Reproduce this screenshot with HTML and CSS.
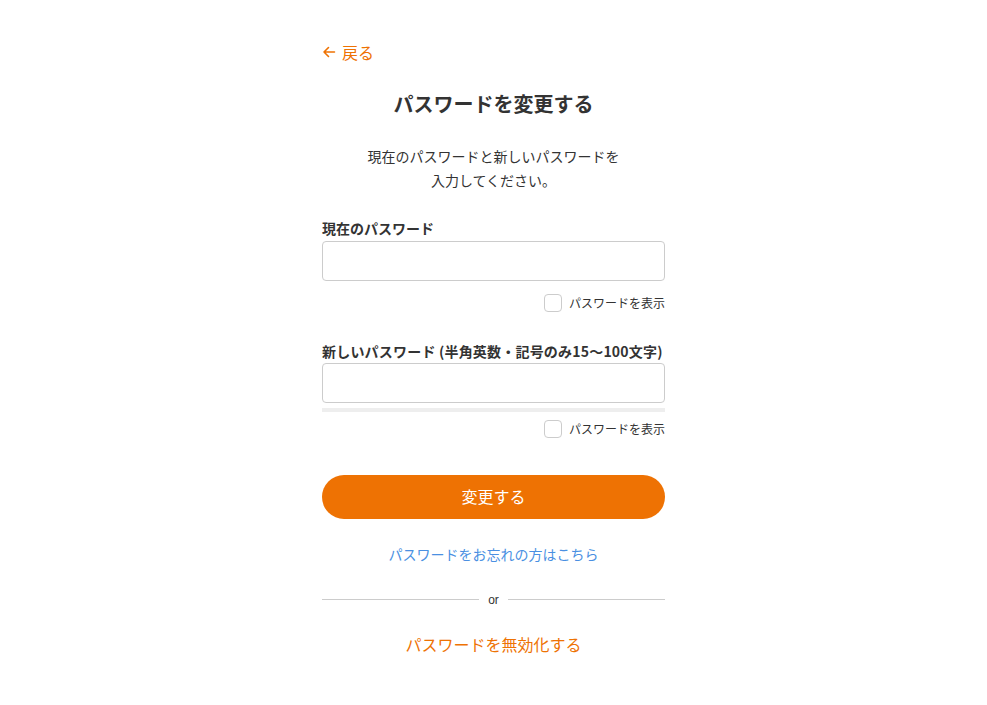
FILE: index.html
```html
<!DOCTYPE html>
<html lang="ja">
<head>
<meta charset="utf-8">
<title>パスワードを変更する</title>
<link rel="stylesheet" href="styles.css">
</head>
<body>
<main class="page">
  <a class="back" href="#">
    <svg class="back-icon" width="14" height="14" viewBox="0 0 14 14" aria-hidden="true"><path d="M12.5 7H2M6.5 2.5L2 7l4.5 4.5" fill="none" stroke="currentColor" stroke-width="1.6" stroke-linecap="round" stroke-linejoin="round"/></svg>
    <span>戻る</span>
  </a>
  <h1 class="title">パスワードを変更する</h1>
  <p class="lead">現在のパスワードと新しいパスワードを<br>入力してください。</p>

  <div class="field">
    <label class="label">現在のパスワード</label>
    <input class="input" type="password">
    <div class="show-row"><span class="box"></span><span class="show-text">パスワードを表示</span></div>
  </div>

  <div class="field field-new">
    <label class="label">新しいパスワード (半角英数・記号のみ15〜100文字)</label>
    <input class="input" type="password">
    <div class="meter"></div>
    <div class="show-row show-row-2"><span class="box"></span><span class="show-text">パスワードを表示</span></div>
  </div>

  <button class="submit" type="button">変更する</button>
  <a class="forgot" href="#">パスワードをお忘れの方はこちら</a>
  <div class="divider"><span class="line"></span><span class="or">or</span><span class="line"></span></div>
  <a class="disable" href="#">パスワードを無効化する</a>
</main>
</body>
</html>
```
FILE: styles.css
```css
* { box-sizing: border-box; }
html, body { margin: 0; padding: 0; background: #fff; }
body {
  font-family: "Noto Sans CJK JP", "Noto Sans", "Liberation Sans", sans-serif;
  color: #333;
}
.page {
  width: 343px;
  margin: 0 auto;
  padding-top: 40px;
  display: flex;
  flex-direction: column;
}
.back {
  display: flex;
  align-items: center;
  gap: 6px;
  color: #ee7203;
  text-decoration: none;
  font-size: 16px;
  line-height: 24px;
  height: 24px;
}
.back-icon { display: block; }
.title {
  margin: 26px 0 0;
  text-align: center;
  font-size: 20px;
  font-weight: 700;
  line-height: 28px;
  color: #333;
}
.lead {
  margin: 26px 0 0;
  text-align: center;
  font-size: 14px;
  line-height: 24px;
  color: #333;
}
.field { display: flex; flex-direction: column; margin-top: 26px; }
.field-new { margin-top: 28px; }
.label {
  font-size: 14px;
  font-weight: 700;
  line-height: 20px;
  margin-bottom: 3px;
}
.field-new .label { margin-bottom: 2px; letter-spacing: 0.2px; }
.input {
  height: 40px;
  width: 100%;
  border: 1px solid #ccc;
  border-radius: 4px;
  background: #fff;
  font: inherit;
  padding: 0 10px;
}
.meter {
  height: 4px;
  background: #eee;
  margin-top: 5px;
}
.show-row {
  display: flex;
  justify-content: flex-end;
  align-items: center;
  gap: 7px;
  margin-top: 12px;
  height: 20px;
}
.show-row-2 { margin-top: 7px; }
.box {
  width: 18px;
  height: 18px;
  border: 1px solid #ccc;
  border-radius: 4px;
  background: #fff;
}
.show-text {
  font-size: 12px;
  color: #333;
  line-height: 20px;
}
.submit {
  margin-top: 36px;
  height: 44px;
  border: none;
  border-radius: 22px;
  background: #ee7203;
  color: #fff;
  font: inherit;
  font-size: 16px;
  padding: 0 0 3px;
}
.forgot {
  margin-top: 24px;
  text-align: center;
  font-size: 14px;
  line-height: 22px;
  color: #4a90e2;
  text-decoration: none;
}
.divider {
  display: flex;
  align-items: center;
  gap: 9px;
  margin-top: 26px;
  height: 16px;
}
.line { flex: 1; height: 1px; background: #ccc; }
.or { font-size: 12px; color: #333; line-height: 16px; padding-top: 2px; font-family: "Liberation Sans", sans-serif; }
.disable {
  margin-top: 25px;
  text-align: center;
  font-size: 16px;
  line-height: 24px;
  color: #ee7203;
  text-decoration: none;
}
```
